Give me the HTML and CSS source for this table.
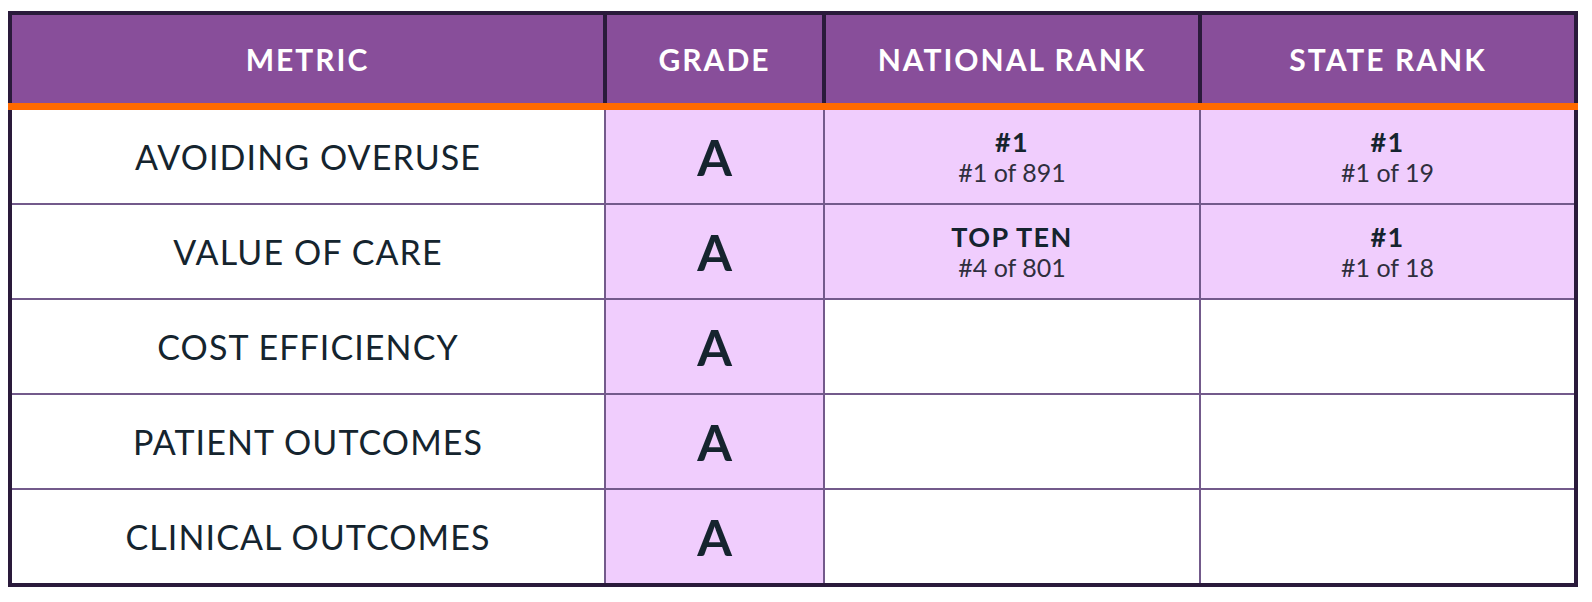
FILE: index.html
```html
<!DOCTYPE html>
<html lang="en">
<head>
<meta charset="utf-8">
<title>Metrics</title>
<link rel="stylesheet" href="styles.css">
</head>
<body>
<table class="grades">
  <colgroup>
    <col class="c-metric">
    <col class="c-grade">
    <col class="c-rank">
    <col class="c-rank">
  </colgroup>
  <thead>
    <tr>
      <th>METRIC</th>
      <th>GRADE</th>
      <th>NATIONAL RANK</th>
      <th>STATE RANK</th>
    </tr>
  </thead>
  <tbody>
    <tr>
      <td class="metric">AVOIDING OVERUSE</td>
      <td class="grade">A</td>
      <td class="rank"><div class="rank-main">#1</div><div class="rank-sub">#1 of 891</div></td>
      <td class="rank"><div class="rank-main">#1</div><div class="rank-sub">#1 of 19</div></td>
    </tr>
    <tr>
      <td class="metric">VALUE OF CARE</td>
      <td class="grade">A</td>
      <td class="rank"><div class="rank-main">TOP TEN</div><div class="rank-sub">#4 of 801</div></td>
      <td class="rank"><div class="rank-main">#1</div><div class="rank-sub">#1 of 18</div></td>
    </tr>
    <tr>
      <td class="metric">COST EFFICIENCY</td>
      <td class="grade">A</td>
      <td class="empty"></td>
      <td class="empty"></td>
    </tr>
    <tr>
      <td class="metric">PATIENT OUTCOMES</td>
      <td class="grade">A</td>
      <td class="empty"></td>
      <td class="empty"></td>
    </tr>
    <tr>
      <td class="metric">CLINICAL OUTCOMES</td>
      <td class="grade">A</td>
      <td class="empty"></td>
      <td class="empty"></td>
    </tr>
  </tbody>
</table>
</body>
</html>
```

FILE: styles.css
```css
html, body {
  margin: 0;
  padding: 0;
  background: #ffffff;
}

body {
  padding: 11px 0 0 8px;
  font-family: "Lato", "Noto Sans", sans-serif;
  color: #15242e;
}

.grades {
  border-collapse: collapse;
  table-layout: fixed;
  width: 1570px;
  border: 4px solid #2a1a3b;
}

.c-metric { width: 595px; }
.c-grade { width: 219px; }
.c-rank { width: 376px; }

.grades th {
  height: 88px;
  padding: 0;
  background: #884e9a;
  color: #ffffff;
  font-size: 30px;
  font-weight: 700;
  letter-spacing: 2px;
  text-align: center;
  vertical-align: middle;
  border-left: 4px solid #2a1a3b;
  border-right: 4px solid #2a1a3b;
  border-bottom: 7px solid #ff6a00;
}

.grades td {
  height: 93px;
  padding: 0;
  text-align: center;
  vertical-align: middle;
  border: 2px solid #735a8b;
}

.metric {
  background: #ffffff;
  font-size: 34px;
  font-weight: 400;
  letter-spacing: 1.1px;
}

.grade {
  background: #f0cdfd;
  font-size: 50px;
  font-weight: 700;
}

.rank {
  background: #f0cdfd;
}

.empty {
  background: #ffffff;
}

.rank-main {
  font-size: 27px;
  font-weight: 700;
  line-height: 31px;
  letter-spacing: 1.4px;
}

.rank-sub {
  font-size: 25px;
  font-weight: 400;
  line-height: 30px;
  color: #2f2f3d;
}
```
